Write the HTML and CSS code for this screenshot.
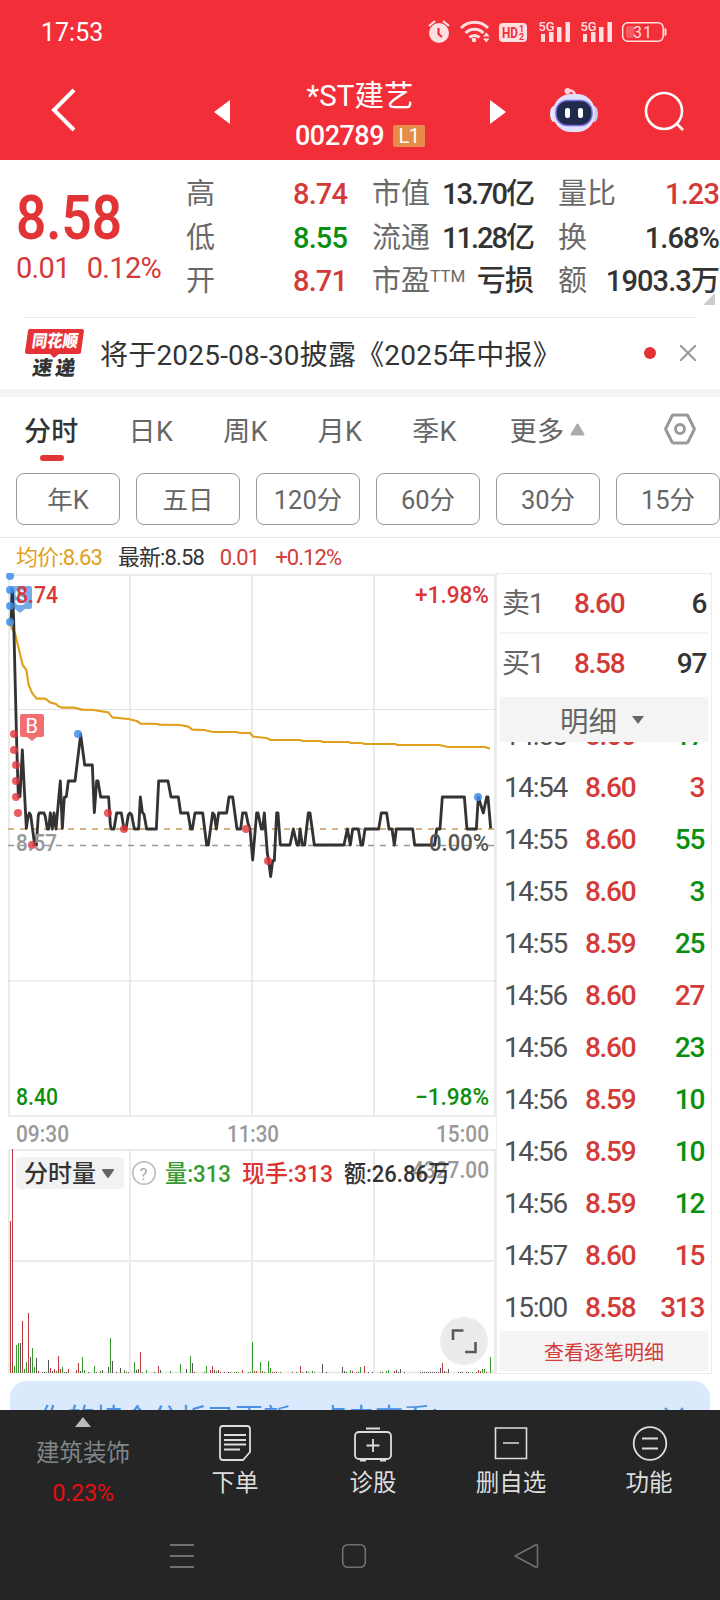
FILE: index.html
```html
<!DOCTYPE html>
<html lang="zh-CN">
<head>
    <meta charset="UTF-8">
    <meta name="viewport" content="width=device-width, initial-scale=1.0">
    <title>*ST建艺 002789</title>
    <link rel="stylesheet" href="styles.css">
</head>
<body>
    <div class="page">
        <header class="top">
            <div class="status">
                <span class="clock">17:53</span>
                <svg class="status-icons" width="250" height="32" viewBox="424 16 250 32">
                    <g fill="#ffdfe0">
                        <circle cx="439" cy="33" r="10"/>
                        <path d="M429 26l6-5M449 26l-6-5" stroke="#ffdfe0" stroke-width="2.2"/>
                        <path d="M438.5 28v6l3.5 3" stroke="#f22f38" stroke-width="2.2" fill="none"/>
                        <path d="M461 28a19 19 0 0 1 27 0M465.500 33a12.500 12.500 0 0 1 18 0M469.500 37.500a7 7 0 0 1 10 0" stroke="#ffdfe0" stroke-width="3" fill="none"/>
                        <circle cx="474" cy="40" r="2.300"/>
                        <path d="M483 36.500l3.300-4 3.300 4zM483 38.500l3.300 4 3.300-4z"/>
                        <rect x="499" y="23" width="28" height="19" rx="4"/>
                        <path d="M541 34h4v8h-4zM549 32h4.500v10h-4.500zM557 27h4.500v15h-4.500zM565.500 22h4.500v20h-4.500z"/>
                        <path d="M583 34h4v8h-4zM591 32h4.500v10h-4.500zM599 27h4.500v15h-4.500zM607.500 22h4.500v20h-4.500z"/>
                        <rect x="626" y="26" width="8" height="12" rx="2" opacity=".25"/>
                        <path d="M664.500 28q2 0 2 2v4q0 2-2 2z"/>
                    </g>
                    <rect x="622.700" y="22.700" width="40.500" height="18.500" rx="5" fill="none" stroke="#ffdfe0" stroke-width="1.500"/>
                    <g class="status-text">
                        <text x="502" y="38" font-size="15" fill="#f22f38" font-weight="700" textLength="16" lengthAdjust="spacingAndGlyphs">HD</text>
                        <text x="519" y="32" font-size="9" fill="#f22f38" font-weight="700">1</text>
                        <text x="519" y="40" font-size="9" fill="#f22f38" font-weight="700">2</text>
                        <text x="538.500" y="30.500" font-size="13" font-weight="500" textLength="16" lengthAdjust="spacingAndGlyphs">5G</text>
                        <text x="580.500" y="30.500" font-size="13" font-weight="500" textLength="16" lengthAdjust="spacingAndGlyphs">5G</text>
                        <text x="633" y="38" font-size="16" textLength="19">31</text>
                    </g>
                </svg>
            </div>
            <div class="titlebar">
                <svg class="back" width="26" height="46" viewBox="0 0 26 46"><path d="M24 3L4 23l20 20" fill="none" stroke="#fff" stroke-width="4"/></svg>
                <svg class="prev" width="16" height="24" viewBox="0 0 16 24"><path d="M16 0v24L0 12z" fill="#fff"/></svg>
                <div class="title">
                    <div class="name">*ST建艺</div>
                    <div class="code">002789<span class="level">L1</span></div>
                </div>
                <svg class="next" width="16" height="24" viewBox="0 0 16 24"><path d="M0 0v24l16-12z" fill="#fff"/></svg>
                <svg class="robot" width="48" height="46" viewBox="0 0 48 46">
                    <path d="M17 4q8-2 8 6" fill="none" stroke="#ffd0de" stroke-width="2.500"/>
                    <circle cx="17.500" cy="4" r="3" fill="#ffd0de"/>
                    <ellipse cx="4" cy="27" rx="4" ry="8" fill="#e6ecff"/>
                    <ellipse cx="44" cy="27" rx="4" ry="8" fill="#c6c8f5"/>
                    <rect x="3" y="7" width="42" height="38" rx="18" fill="#dfe2fa"/>
                    <rect x="6" y="13.500" width="36" height="25" rx="11.500" fill="#1f2a4d" stroke="#7c6be0" stroke-width="1.500"/>
                    <rect x="15" y="21" width="5" height="10" rx="2.200" fill="#fff"/>
                    <rect x="28" y="21" width="5" height="10" rx="2.200" fill="#fff"/>
                </svg>
                <svg class="search" width="42" height="42" viewBox="0 0 42 42"><g fill="none" stroke="#fff" stroke-width="2.600"><circle cx="20" cy="20" r="18"/><path d="M32 32l7 7"/></g></svg>
            </div>
        </header>

        <main class="content">
            <section class="quote">
                <div class="last">
                    <div class="price">8.58</div>
                    <div class="change"><span>0.01</span><span>0.12%</span></div>
                </div>
                <dl class="stats">
                    <div><dt>高</dt><dd class="up">8.74</dd></div>
                    <div><dt>市值</dt><dd class="tight">13.70亿</dd></div>
                    <div><dt>量比</dt><dd class="up">1.23</dd></div>
                    <div><dt>低</dt><dd class="down">8.55</dd></div>
                    <div><dt>流通</dt><dd class="tight">11.28亿</dd></div>
                    <div><dt>换</dt><dd>1.68%</dd></div>
                    <div><dt>开</dt><dd class="up">8.71</dd></div>
                    <div><dt>市盈<sup>TTM</sup></dt><dd>亏损</dd></div>
                    <div><dt>额</dt><dd>1903.3万</dd></div>
                </dl>
                <i class="corner"></i>
            </section>

            <section class="news">
                <svg class="news-logo" width="60" height="50" viewBox="0 0 60 50">
                    <path d="M5 1h52q2 0 2 2l-3 21q0 2-2 2H34l-5 4-4-4H2q-2 0-2-2L3 3q0-2 2-2z" fill="#e43237"/>
                    <g transform="skewX(-8)" font-weight="900">
                        <text x="9" y="19.500" font-size="17" fill="#fff" textLength="46" lengthAdjust="spacingAndGlyphs">同花顺</text>
                        <text x="13" y="47" font-size="20" fill="#333" textLength="43">速递</text>
                    </g>
                </svg>
                <span class="news-text">将于2025-08-30披露《2025年中报》</span>
                <i class="news-dot"></i>
                <svg width="16" height="16" viewBox="0 0 16 16"><path d="M0 0l16 16M16 0L0 16" stroke="#999" stroke-width="2"/></svg>
            </section>

            <nav class="tabs">
                <span class="active">分时</span>
                <span>日K</span>
                <span>周K</span>
                <span>月K</span>
                <span>季K</span>
                <span class="more">更多<svg width="15" height="13" viewBox="0 0 15 13"><path d="M7.500 1.500l6 10h-12z" fill="#aaa" stroke="#aaa" stroke-width="2" stroke-linejoin="round"/></svg></span>
                <svg class="setting" width="32" height="32" viewBox="0 0 32 32"><g fill="none" stroke="#999" stroke-width="3"><path d="M9.500 2h13q1 0 1.500 1l6 12q.5 1 0 2l-6 12q-.5 1-1.500 1h-13q-1 0-1.500-1L2 17q-.5-1 0-2L8 3q.5-1 1.500-1z"/><circle cx="16" cy="16" r="4.500"/></g></svg>
            </nav>

            <div class="periods">
                <span>年K</span><span>五日</span><span>120分</span><span>60分</span><span>30分</span><span>15分</span>
            </div>

            <div class="legend">
                <span class="avg">均价:8.63</span><span>最新:8.58</span><span class="up">0.01</span><span class="up">+0.12%</span>
            </div>

            <section class="board">
                <svg class="chart" width="496" height="802" viewBox="0 573 496 802">
                    <!-- grid -->
                    <g fill="none" stroke="#ebebeb" stroke-width="2">
                        <path d="M8 575h488M8 1116h488M9 575v541M130 575v541M252 575v541M374 575v541M495 575v541"/>
                        <path d="M8 1150h488M8 1261h488M8 1372.500h488M9 1150v223M130 1150v223M252 1150v223M374 1150v223M495 1150v223"/>
                        <path d="M8 709.500h488M8 981h488" stroke="#e2e2e2" stroke-width="1.200"/>
                    </g>
                    <path d="M8 829h488" stroke="#c59a55" stroke-width="1.500" stroke-dasharray="6 6"/>
                    <path d="M8 845.500h488" stroke="#999" stroke-width="1.500" stroke-dasharray="6 6"/>

                    <!-- sell marker -->
                    <g opacity=".75">
                        <path d="M10 586h20q2 0 2 2v19q0 2-2 2h-5l-5 4-5-4h-5z" fill="#4a90e6"/>
                    </g>
                    <text x="14" y="605" font-size="20" fill="#fff">S</text>

                    <!-- average and price lines -->
                    <g transform="translate(0 570) scale(.33333)" fill="none" stroke-linejoin="round">
                        <polyline stroke="#e0a01c" stroke-width="6.500" points="30,155 35,175 45,190 52,218 68,285 79,300 86,345 97,370 110,386 136,386 150,397 168,402 175,409 187,413 223,413 245,419 280,420 325,427 337,442 385,447 410,453 422,461 470,462 480,464 540,465 565,470 577,479 612,480 640,486 710,486 720,489 750,489 760,500 800,504 812,510 898,510 910,513 960,513 970,516 1045,516 1053,519 1085,519 1095,522 1185,522 1192,525 1317,525 1345,531 1455,531 1470,536"/>
                        <polyline stroke="#333" stroke-width="8.500" points="33,155 37,60 41,150 50,520 55,680 60,680 67,540 79,775 84,740 88,729 92,735 104,825 109,825 115,735 118,729 132,729 136,740 142,777 146,777 151,729 157,777 162,729 168,777 181,633 187,775 193,682 199,680 205,633 225,633 234,560 242,493 254,585 277,585 283,728 290,633 294,633 302,681 326,681 331,765 334,777 342,777 350,729 364,729 372,777 378,777 385,735 390,729 395,735 403,777 416,777 421,681 427,727 432,733 440,777 469,777 476,633 504,633 513,681 535,681 542,729 564,729 572,777 577,777 585,729 608,729 620,825 625,825 638,729 643,735 649,777 656,729 680,729 687,681 698,681 711,777 722,777 728,729 738,729 744,760 750,777 758,870 770,729 774,729 784,777 788,777 793,729 802,850 806,872 812,920 818,872 823,872 830,729 834,729 841,825 870,825 880,777 891,825 896,825 900,777 907,825 914,825 925,729 930,729 943,825 1032,825 1042,777 1051,825 1058,777 1075,777 1083,825 1088,825 1095,777 1136,777 1144,729 1160,729 1167,777 1176,777 1183,825 1189,777 1238,777 1244,825 1304,825 1310,777 1320,777 1327,681 1393,681 1401,777 1429,777 1435,681 1450,729 1460,681 1464,681 1472,775"/>
                    </g>

                    <g fill="#3f8eeb" fill-opacity=".85">
                        <circle cx="10" cy="576" r="4"/><circle cx="10" cy="590" r="4"/><circle cx="10" cy="606" r="4"/><circle cx="10" cy="622" r="4"/>
                        <circle cx="78" cy="734" r="4"/><circle cx="478" cy="797" r="4"/>
                    </g>
                    <g fill="#e33538" fill-opacity=".8">
                        <circle cx="14" cy="734" r="4"/><circle cx="14" cy="750" r="4"/><circle cx="16" cy="765" r="4"/><circle cx="16" cy="781" r="4"/>
                        <circle cx="16" cy="797" r="4"/><circle cx="18" cy="813" r="4"/><circle cx="32" cy="845" r="4"/><circle cx="108" cy="813" r="4"/>
                        <circle cx="124" cy="829" r="4"/><circle cx="246" cy="829" r="4"/><circle cx="268" cy="861" r="4"/>
                    </g>
                    <path d="M22 714h20q2 0 2 2v19q0 2-2 2h-5l-5 4-5-4h-5q-2 0-2-2v-19q0-2 2-2z" fill="#f07071"/>
                    <text x="25.500" y="732.500" font-size="20" fill="#fff">B</text>

                    <!-- axis labels -->
                    <g class="axis">
                        <text class="up" x="16" y="602.500" textLength="42" lengthAdjust="spacingAndGlyphs">8.74</text>
                        <text class="up" x="415" y="602.500" textLength="74" lengthAdjust="spacingAndGlyphs">+1.98%</text>
                        <text class="muted" x="16" y="850.500" textLength="41" lengthAdjust="spacingAndGlyphs">8.57</text>
                        <text class="zero" x="429" y="850.500" textLength="60" lengthAdjust="spacingAndGlyphs">0.00%</text>
                        <text class="down" x="16" y="1105" textLength="42" lengthAdjust="spacingAndGlyphs">8.40</text>
                        <text class="down" x="415" y="1105" textLength="74" lengthAdjust="spacingAndGlyphs">−1.98%</text>
                        <text class="muted" x="16" y="1142" textLength="53" lengthAdjust="spacingAndGlyphs">09:30</text>
                        <text class="muted" x="227" y="1142" textLength="52" lengthAdjust="spacingAndGlyphs">11:30</text>
                        <text class="muted" x="436" y="1142" textLength="53" lengthAdjust="spacingAndGlyphs">15:00</text>
                        <text class="muted" x="412" y="1177.500" textLength="77" lengthAdjust="spacingAndGlyphs">4327.00</text>
                    </g>

                    <!-- volume -->
                    <g id="volume"></g>
                    <rect x="16" y="1157" width="108" height="32" rx="4" fill="#f2f2f2"/>
                    <path d="M103 1170h10l-5 7z" fill="#666" stroke="#666" stroke-width="2" stroke-linejoin="round"/>
                    <circle cx="144" cy="1173" r="11.300" fill="none" stroke="#bbb" stroke-width="1.500"/>
                    <text x="139.500" y="1179.500" font-size="17" fill="#aaa">?</text>
                    <g class="axis">
                        <text x="24" y="1182" fill="#333" textLength="72" lengthAdjust="spacingAndGlyphs">分时量</text>
                        <text x="165" y="1182" fill="#379a2c" textLength="66" lengthAdjust="spacingAndGlyphs">量:313</text>
                        <text x="242" y="1182" fill="#dc3232" textLength="91" lengthAdjust="spacingAndGlyphs">现手:313</text>
                        <text x="344" y="1182" fill="#333" textLength="106" lengthAdjust="spacingAndGlyphs">额:26.86万</text>
                    </g>
                    <circle cx="464" cy="1341" r="24" fill="#ebebeb"/>
                    <path d="M453 1340v-9.500h10.500M465 1352h10.500v-10" fill="none" stroke="#5a5a5a" stroke-width="2.600"/>
                </svg>

                <aside class="book">
                    <div class="level-row"><span>卖1</span><b class="up">8.60</b><b>6</b></div>
                    <div class="level-row"><span>买1</span><b class="up">8.58</b><b>97</b></div>
                    <div class="book-head">明细<i></i></div>
                    <div class="ticks">
                        <div class="tick first"><span>14:53</span><b>8.60</b><em class="down">17</em></div>
                        <div class="tick"><span>14:54</span><b>8.60</b><em class="up">3</em></div>
                        <div class="tick"><span>14:55</span><b>8.60</b><em class="down">55</em></div>
                        <div class="tick"><span>14:55</span><b>8.60</b><em class="down">3</em></div>
                        <div class="tick"><span>14:55</span><b>8.59</b><em class="down">25</em></div>
                        <div class="tick"><span>14:56</span><b>8.60</b><em class="up">27</em></div>
                        <div class="tick"><span>14:56</span><b>8.60</b><em class="down">23</em></div>
                        <div class="tick"><span>14:56</span><b>8.59</b><em class="down">10</em></div>
                        <div class="tick"><span>14:56</span><b>8.59</b><em class="down">10</em></div>
                        <div class="tick"><span>14:56</span><b>8.59</b><em class="down">12</em></div>
                        <div class="tick"><span>14:57</span><b>8.60</b><em class="up">15</em></div>
                        <div class="tick"><span>15:00</span><b>8.58</b><em class="up">313</em></div>
                    </div>
                    <div class="book-foot">查看逐笔明细</div>
                </aside>
            </section>

            <div class="notice">
                <span>你的持仓分析已更新，点击查看!</span>
                <svg width="20" height="20" viewBox="0 0 20 20"><path d="M1 1l18 18M19 1L1 19" stroke="#4a90e2" stroke-width="2"/></svg>
            </div>
        </main>

        <nav class="toolbar">
            <div class="sector"><i></i><span>建筑装饰</span><em>0.23%</em></div>
            <div class="tool">
                <svg width="40" height="40" viewBox="0 0 40 40"><g fill="none" stroke="#ddd" stroke-width="1.800"><path d="M8 3h24q3 0 3 3v23l-7 8H8q-3 0-3-3V6q0-3 3-3zM9 12h22M9 17h22M9 21.500h22M9 26.500h16"/></g></svg>
                <span>下单</span>
            </div>
            <div class="tool">
                <svg width="40" height="40" viewBox="0 0 40 40"><g fill="none" stroke="#ddd" stroke-width="1.800"><rect x="2" y="9" width="36" height="27" rx="4"/><path d="M13 5.500h14M20 16v13M13.500 22.500h13M7 37.500h6M27 37.500h6"/></g></svg>
                <span>诊股</span>
            </div>
            <div class="tool">
                <svg width="40" height="40" viewBox="0 0 40 40"><g fill="none" stroke="#ddd" stroke-width="1.600"><path d="M4.500 5h31v30.500h-31zM12 20h16"/></g></svg>
                <span>删自选</span>
            </div>
            <div class="tool">
                <svg width="40" height="40" viewBox="0 0 40 40"><g fill="none" stroke="#ddd" stroke-width="1.800"><circle cx="21" cy="20.500" r="16.300"/><path d="M13 15.500h16M13 25.500h16"/></g></svg>
                <span>功能</span>
            </div>
        </nav>
        <div class="sysnav">
            <svg width="26" height="26" viewBox="0 0 26 26"><path d="M1 2h24M1 13h24M1 24h24" stroke="#707070" stroke-width="1.800"/></svg>
            <svg width="26" height="26" viewBox="0 0 26 26"><rect x="1.700" y="1.700" width="22.600" height="22.600" rx="5" fill="none" stroke="#707070" stroke-width="1.600"/></svg>
            <svg width="26" height="26" viewBox="0 0 26 26"><path d="M2 13L23 1.800q1.500-.5 1.500 1v20.400q0 1.500-1.500 1z" fill="none" stroke="#707070" stroke-width="1.600" stroke-linejoin="round"/></svg>
        </div>
    </div>
    <script>
        // [x, height] per minute, grouped by bar colour
        const volume = {
            '#b93a3a': [[10,152],[12,224],[22,52],[28,60],[38,2],[50,5],[54,4],[58,17],[60,4],[68,4],[76,3],[78,10],[96,1],[116,1],[126,1],[128,1],[140,21],[158,7],[194,1],[210,3],[212,7],[218,3],[220,1],[228,1],[242,3],[254,2],[256,2],[262,2],[272,1],[274,1],[276,1],[292,1],[300,7],[352,2],[356,1],[364,7],[380,1],[394,2],[438,1],[442,10],[478,3],[480,2],[486,1]],
            '#379a2c': [[14,7],[16,28],[18,30],[24,4],[26,11],[32,25],[34,6],[46,1],[56,2],[62,6],[82,16],[84,3],[94,7],[100,2],[110,35],[124,3],[134,11],[142,1],[146,3],[170,2],[180,9],[190,17],[204,1],[206,7],[216,2],[234,1],[236,1],[238,1],[248,1],[250,1],[252,31],[260,11],[264,1],[268,12],[270,5],[280,1],[296,1],[308,1],[312,2],[314,1],[350,3],[360,6],[382,1],[386,2],[388,3],[472,1],[482,4],[484,4],[490,16]],
            '#555': [[20,30],[30,16],[36,15],[42,1],[44,1],[48,13],[52,2],[64,1],[66,1],[80,2],[88,1],[102,3],[108,6],[112,12],[120,5],[136,3],[138,4],[154,1],[160,3],[186,4],[192,10],[214,3],[224,1],[230,1],[302,1],[306,2],[322,9],[326,1],[342,6],[344,2],[346,1],[358,1],[368,1],[372,1],[396,3],[398,1],[400,4],[404,1],[420,1],[422,1],[424,1],[426,1],[428,1],[430,1],[432,1],[434,1],[436,1],[440,5],[444,2],[446,1],[448,4],[458,1],[460,1],[462,1],[466,1],[468,1],[476,1]]
        };
        const group = document.getElementById('volume');
        group.innerHTML = Object.keys(volume).map(color => {
            const d = volume[color].map(([x, h]) => `M${x + 0.5} 1373v-${h}`).join('');
            return `<path d="${d}" stroke="${color}" stroke-width="1"/>`;
        }).join('');
    </script>
</body>
</html>
```
FILE: styles.css
```css
* {
    box-sizing: border-box;
}
body {
    margin: 0;
    background: #fff;
    color: #333;
    font-family: Roboto, "Noto Sans CJK SC", sans-serif;
}
svg {
    display: block;
    flex-shrink: 0;
}
i, em {
    font-style: normal;
}
.page {
    width: 720px;
    height: 1600px;
    display: flex;
    flex-direction: column;
    overflow: hidden;
}
.up {
    color: #d33b38;
    fill: #d93636;
}
.down {
    color: #0b8f10;
    fill: #0b8f10;
}

/* header */
.top {
    height: 160px;
    background: #f22f38;
    color: #fff;
}
.status {
    height: 64px;
    display: flex;
    align-items: center;
    justify-content: space-between;
    padding: 0 46px 0 41px;
}
.clock {
    font-size: 25px;
    padding-top: 1px;
}
.status-text {
    fill: #ffdfe0;
}
.titlebar {
    height: 96px;
    display: flex;
    align-items: center;
    padding: 0 36px 4px 50px;
}
.prev {
    margin-left: 138px;
    margin-top: 4px;
}
.next {
    margin-top: 4px;
}
.title {
    width: 260px;
    text-align: center;
    padding-top: 11px;
}
.name {
    font-size: 29.500px;
    line-height: 40px;
}
.code {
    display: flex;
    justify-content: center;
    align-items: center;
    font-size: 27px;
    line-height: 40px;
    font-weight: 500;
    letter-spacing: -0.5px;
}
.level {
    width: 32px;
    height: 22px;
    margin-left: 9px;
    border-radius: 2px;
    background: #e58c4a;
    font-size: 20px;
    line-height: 23px;
    font-weight: 400;
}
.robot {
    margin-left: 44px;
}
.search {
    margin-left: auto;
    margin-right: -2px;
    margin-top: 4px;
}

/* quote */
.quote {
    position: relative;
    display: flex;
    height: 157px;
    padding: 13px 0 0 16px;
}
.last {
    width: 170px;
    padding-top: 11px;
    color: #e23335;
}
.price {
    font-size: 61px;
    line-height: 68px;
    font-weight: 600;
    transform: scaleX(0.87);
    transform-origin: left;
}
.change {
    display: flex;
    gap: 17px;
    font-size: 29px;
    line-height: 32px;
    letter-spacing: -0.7px;
    color: #d33b38;
}
.stats {
    margin: 0;
    display: grid;
    grid-template-columns: repeat(3, 161px);
    grid-auto-rows: 43.600px;
    column-gap: 25px;
}
.stats div {
    display: flex;
    justify-content: space-between;
    line-height: 43px;
    white-space: nowrap;
}
.stats dt {
    font-size: 29px;
    color: #6a6a6a;
}
.stats sup {
    font-size: 17px;
    line-height: 0;
    vertical-align: 9px;
}
.stats dd {
    margin: 0;
    font-size: 29px;
    font-weight: 500;
    letter-spacing: -0.9px;
}
.stats .tight {
    letter-spacing: -2px;
}
.corner {
    position: absolute;
    right: 5px;
    bottom: 12px;
    border-left: 12px solid transparent;
    border-bottom: 12px solid #ccc;
}

/* news */
.news {
    display: flex;
    align-items: center;
    height: 80px;
    padding: 0 24px 0 25px;
    border-bottom: 8px solid #f4f4f4;
    background: linear-gradient(#ebebeb, #ebebeb) 24px 0 / 672px 1px no-repeat;
}
.news-text {
    margin-left: 15px;
    font-size: 28px;
    letter-spacing: 0.2px;
}
.news-dot {
    width: 12px;
    height: 12px;
    margin-left: auto;
    margin-right: 24px;
    border-radius: 50%;
    background: #e43237;
}

/* tabs */
.tabs {
    display: flex;
    align-items: center;
    gap: 50px;
    height: 68px;
    padding: 0 24px 4px 24px;
    font-size: 27px;
    color: #666;
}
.tabs span {
    position: relative;
    letter-spacing: 0.3px;
}
.tabs .active {
    color: #333;
    font-weight: 500;
}
.active::after {
    content: "";
    position: absolute;
    left: 16px;
    bottom: -12px;
    width: 24px;
    height: 6px;
    border-radius: 3px;
    background: #e23335;
}
.tabs .more {
    display: flex;
    align-items: center;
    gap: 6px;
    margin-left: 3px;
}
.setting {
    margin-left: auto;
}
.periods {
    display: flex;
    gap: 16px;
    height: 73px;
    padding: 8px 0 0 16px;
    border-bottom: 1px solid #e6e6e6;
}
.periods span {
    width: 104px;
    height: 52px;
    flex-shrink: 0;
    border: 1px solid #999;
    border-radius: 8px;
    text-align: center;
    font-size: 25.500px;
    line-height: 53px;
    color: #666;
}
.legend {
    display: flex;
    gap: 16px;
    height: 35px;
    padding-left: 16px;
    font-size: 22px;
    line-height: 40px;
    letter-spacing: -0.9px;
}
.legend .avg {
    color: #e0a01c;
}

/* chart and order book */
.board {
    display: flex;
    height: 801px;
}
.axis {
    font-size: 23.500px;
    font-weight: 500;
}
.axis .muted {
    fill: #999;
}
.axis .zero {
    fill: #555;
}
.book {
    display: flex;
    flex-direction: column;
    width: 216px;
    padding: 0 3px;
    border: 1px solid #ebebeb;
    font-size: 28px;
}
.level-row {
    display: grid;
    grid-template-columns: 72px 60px 1fr;
    height: 60px;
    padding: 0 2px 0 2px;
    line-height: 59px;
    border-bottom: 2px solid #f4f4f4;
}
.level-row + .level-row {
    height: 63px;
    line-height: 59px;
    border-bottom: none;
}
.level-row span {
    color: #666;
    font-size: 28px;
    letter-spacing: -1px;
}
.level-row b, .tick b, .tick em {
    font-weight: 500;
    letter-spacing: -1.300px;
}
.level-row b:last-child {
    text-align: right;
}
.book-head {
    display: flex;
    align-items: center;
    justify-content: center;
    gap: 15px;
    height: 45px;
    padding-right: 4px;
    flex-shrink: 0;
    background: #f4f4f4;
    color: #666;
    font-size: 28.500px;
}
.book-head i {
    border: 6px solid transparent;
    border-top: 8px solid #666;
    border-bottom: none;
}
.ticks {
    flex: 1;
    overflow: hidden;
}
.tick {
    display: grid;
    grid-template-columns: 81px 60px 1fr;
    height: 52px;
    line-height: 52px;
    padding: 0 4px 0 4px;
}
.tick.first {
    margin-top: -32px;
}
.tick span {
    color: #505050;
    letter-spacing: -1.400px;
}
.tick b {
    color: #d33b38;
}
.tick em {
    text-align: right;
}
.book-foot {
    height: 40px;
    margin-bottom: 2px;
    background: #f4f4f4;
    color: #d33b38;
    font-size: 20px;
    line-height: 44px;
    text-align: center;
}
.notice {
    display: flex;
    justify-content: space-between;
    height: 80px;
    margin: 7px 10px 0;
    padding: 20px 26px 0 29px;
    border-radius: 16px;
    background: #dae9fc;
    color: #4a90e2;
    font-size: 28px;
    line-height: 38px;
}
.notice svg {
    margin-top: 6px;
}
.content {
    flex: 1;
    min-height: 0;
    overflow: hidden;
}

/* bottom bars */
.toolbar {
    display: grid;
    grid-template-columns: 166px repeat(4, 138px);
    height: 106px;
    background: #252525;
    color: #ddd;
    font-size: 23.500px;
}
.sector, .tool {
    display: flex;
    flex-direction: column;
    align-items: center;
}
.sector i {
    margin-top: 7px;
    border: 8px solid transparent;
    border-top: none;
    border-bottom: 10px solid #bbb;
}
.sector span {
    margin-top: 11px;
    line-height: 30px;
    color: #80878a;
}
.sector em {
    margin-top: 10px;
    line-height: 30px;
    color: #e60f0f;
    letter-spacing: -0.3px;
}
.tool svg {
    margin-top: 13px;
}
.tool span {
    margin-top: 4px;
    line-height: 32px;
}
.sysnav {
    display: grid;
    grid-template-columns: repeat(3, 172px);
    justify-items: center;
    align-items: center;
    height: 84px;
    padding: 0 0 4px 96px;
    background: #252525;
}
```
